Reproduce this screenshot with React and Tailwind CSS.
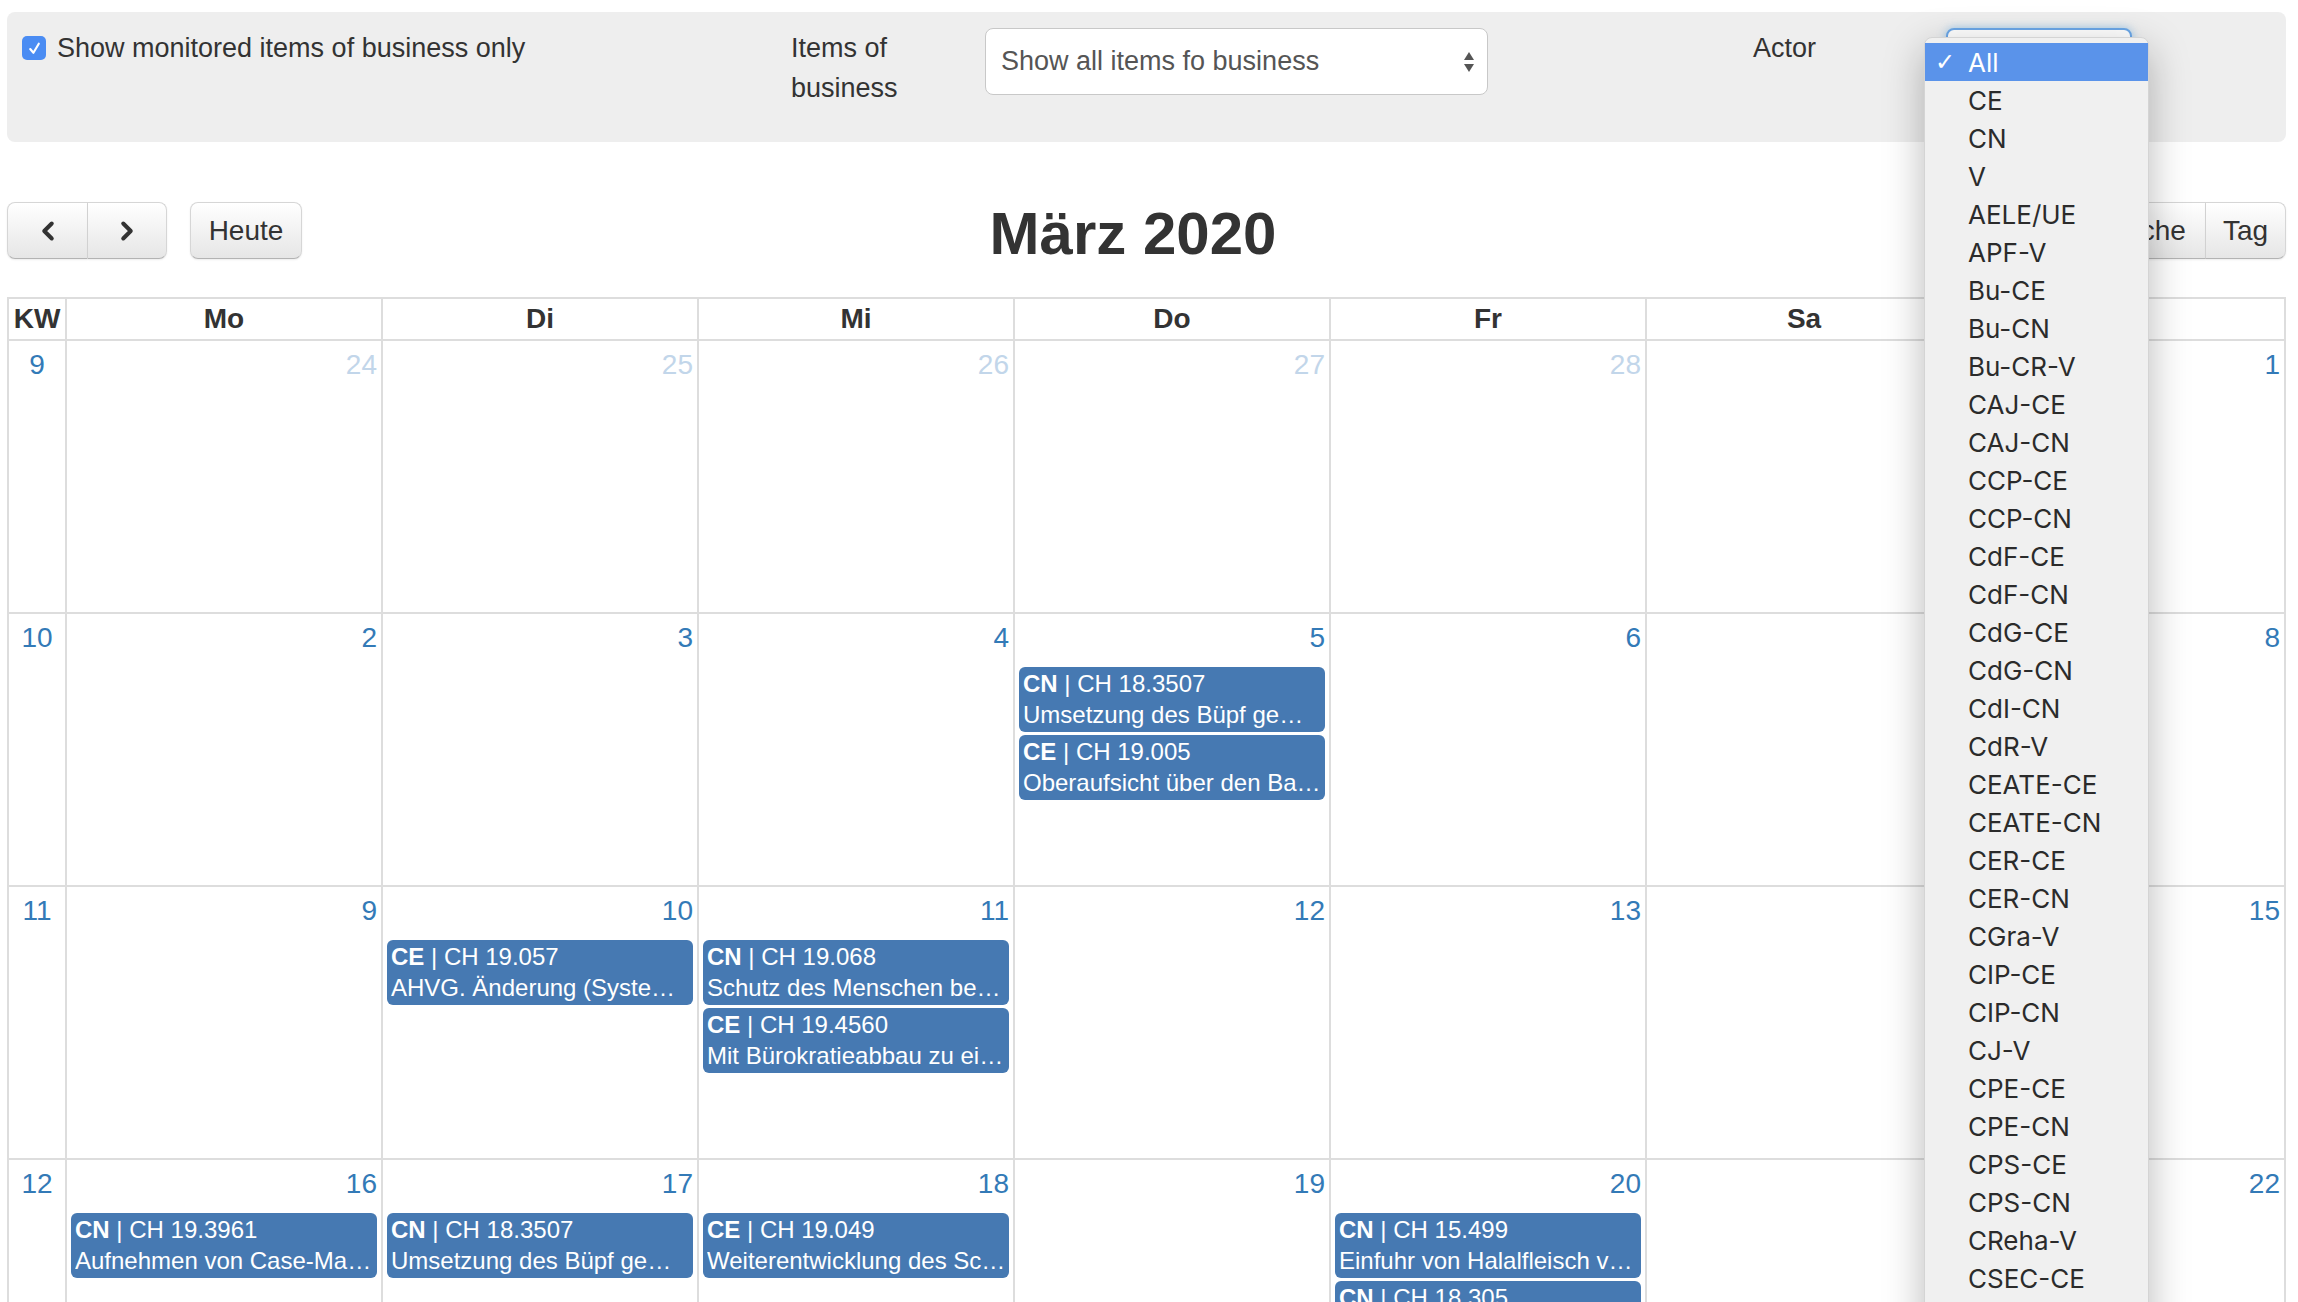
import { ChevronLeft, ChevronRight } from 'lucide-react';

const ACTORS = [
  'All', 'CE', 'CN', 'V', 'AELE/UE', 'APF-V', 'Bu-CE', 'Bu-CN', 'Bu-CR-V', 'CAJ-CE', 'CAJ-CN',
  'CCP-CE', 'CCP-CN', 'CdF-CE', 'CdF-CN', 'CdG-CE', 'CdG-CN', 'CdI-CN', 'CdR-V', 'CEATE-CE',
  'CEATE-CN', 'CER-CE', 'CER-CN', 'CGra-V', 'CIP-CE', 'CIP-CN', 'CJ-V', 'CPE-CE', 'CPE-CN',
  'CPS-CE', 'CPS-CN', 'CReha-V', 'CSEC-CE', 'CSEC-CN', 'CSSS-CE',
];

const DAYS = ['Mo', 'Di', 'Mi', 'Do', 'Fr', 'Sa', 'So'];

const EVENTS = {
  5: [
    { actor: 'CN', id: 'CH 18.3507', title: 'Umsetzung des Büpf ge…' },
    { actor: 'CE', id: 'CH 19.005', title: 'Oberaufsicht über den Ba…' },
  ],
  10: [{ actor: 'CE', id: 'CH 19.057', title: 'AHVG. Änderung (Syste…' }],
  11: [
    { actor: 'CN', id: 'CH 19.068', title: 'Schutz des Menschen be…' },
    { actor: 'CE', id: 'CH 19.4560', title: 'Mit Bürokratieabbau zu ei…' },
  ],
  16: [{ actor: 'CN', id: 'CH 19.3961', title: 'Aufnehmen von Case-Ma…' }],
  17: [{ actor: 'CN', id: 'CH 18.3507', title: 'Umsetzung des Büpf ge…' }],
  18: [{ actor: 'CE', id: 'CH 19.049', title: 'Weiterentwicklung des Sc…' }],
  20: [
    { actor: 'CN', id: 'CH 15.499', title: 'Einfuhr von Halalfleisch v…' },
    { actor: 'CN', id: 'CH 18.305', title: 'Verbot von Halal…' },
  ],
};

const WEEKS = [
  { kw: 9, days: [24, 25, 26, 27, 28, 29, 1], other: [true, true, true, true, true, true, false] },
  { kw: 10, days: [2, 3, 4, 5, 6, 7, 8] },
  { kw: 11, days: [9, 10, 11, 12, 13, 14, 15] },
  { kw: 12, days: [16, 17, 18, 19, 20, 21, 22] },
];

function FcButton({ children, className = '' }) {
  return (
    <button
      className={`h-[57px] flex items-center justify-center border border-[#d6d6d6] border-b-[#b3b3b3] bg-linear-to-b from-white to-[#e6e6e6] text-[#333] text-[28px] shadow-[0_1px_2px_rgba(0,0,0,0.08)] ${className}`}
    >
      {children}
    </button>
  );
}

function Event({ ev }) {
  return (
    <div className="h-[65px] mb-[3px] rounded-[6px] bg-[#4679b2] text-white text-[24px] leading-[31px] px-[4px] pt-[1px] overflow-hidden whitespace-nowrap">
      <div>
        <span className="font-bold">{ev.actor}</span> | {ev.id}
      </div>
      <div className="overflow-hidden">{ev.title}</div>
    </div>
  );
}

export default function App() {
  return (
    <div className="relative h-[1302px] w-full overflow-hidden bg-white text-[#333] font-['Liberation_Sans',Arial,sans-serif]">
      {/* filter panel */}
      <div className="ml-[7px] mr-[12px] mt-[12px] h-[130px] rounded-[8px] bg-[#eeeeee] flex items-start text-[27px]">
        <div className="w-[784px] pl-[15px] pt-[16px] flex items-center gap-[11px]">
          <div className="w-[24px] h-[24px] rounded-[5px] bg-[#4a8cf3] flex items-center justify-center">
            <svg width="15" height="15" viewBox="0 0 14 14">
              <path d="M3 7.5 L6 11 L11 2.5" fill="none" stroke="white" strokeWidth="2" strokeLinecap="round" strokeLinejoin="round" />
            </svg>
          </div>
          <span className="leading-[40px]">Show monitored items of business only</span>
        </div>
        <div className="w-[194px] pt-[16px] leading-[40px]">
          Items of
          <br />
          business
        </div>
        <div className="w-[503px] h-[67px] mt-[16px] rounded-[8px] border border-[#c8c8c8] bg-white flex items-center justify-between pl-[15px] pr-[12px] text-[#555]">
          <span>Show all items fo business</span>
          <svg width="12" height="24" viewBox="0 0 12 24">
            <path d="M6 2 L11 10 L1 10 Z" fill="#555" />
            <path d="M6 22 L11 14 L1 14 Z" fill="#555" />
          </svg>
        </div>
        <div className="w-[265px]" />
        <div className="w-[193px] pt-[16px] leading-[40px]">Actor</div>
        <div className="w-[186px] h-[67px] mt-[16px] rounded-[8px] border-2 border-[#6ba7e8] bg-white shadow-[0_0_8px_rgba(102,175,233,0.6)]" />
      </div>

      {/* toolbar */}
      <div className="ml-[7px] mr-[12px] mt-[60px] h-[57px] flex items-center">
        <div className="flex">
          <FcButton className="w-[81px] rounded-l-[8px]">
            <ChevronLeft size={30} strokeWidth={3.2} />
          </FcButton>
          <FcButton className="w-[79px] rounded-r-[8px] border-l-0">
            <ChevronRight size={30} strokeWidth={3.2} />
          </FcButton>
        </div>
        <FcButton className="ml-[23px] w-[112px] rounded-[8px]">Heute</FcButton>
        <div className="flex-1 text-center pt-[7px]">
          <h2 className="text-[60px] font-bold leading-none">März 2020</h2>
        </div>
        <div className="flex">
          <FcButton className="w-[116px] rounded-l-[8px] bg-none bg-[#cccccc] shadow-[inset_0_2px_4px_rgba(0,0,0,0.15)]">Monat</FcButton>
          <FcButton className="w-[126px] border-l-0">Woche</FcButton>
          <FcButton className="w-[80px] rounded-r-[8px] border-l-0">Tag</FcButton>
        </div>
      </div>

      {/* calendar */}
      <div className="ml-[7px] mr-[12px] mt-[38px] border-t-2 border-l-2 border-[#dddddd]">
        <div className="grid grid-cols-[58px_repeat(6,316px)_1fr]">
          <div className="h-[42px] border-r-2 border-b-2 border-[#dddddd] flex items-center justify-center text-[28px] font-bold">KW</div>
          {DAYS.map((d) => (
            <div key={d} className="h-[42px] border-r-2 border-b-2 border-[#dddddd] flex items-center justify-center text-[28px] font-bold">
              {d}
            </div>
          ))}
        </div>
        {WEEKS.map((w) => (
          <div key={w.kw} className="grid grid-cols-[58px_repeat(6,316px)_1fr]">
            <div className="h-[273px] border-r-2 border-b-2 border-[#dddddd] text-center text-[28px] leading-[32px] pt-[8px] text-[#337ab7]">
              {w.kw}
            </div>
            {w.days.map((n, i) => {
              const other = w.other ? w.other[i] : false;
              const evs = other ? [] : EVENTS[n] || [];
              return (
                <div key={i} className="h-[273px] min-w-0 border-r-2 border-b-2 border-[#dddddd]">
                  <div className={`text-right pr-[4px] pt-[8px] text-[28px] leading-[32px] ${other ? 'text-[#c2d6ea]' : 'text-[#337ab7]'}`}>
                    {n}
                  </div>
                  <div className="mt-[13px] px-[4px]">
                    {evs.map((ev, j) => (
                      <Event key={j} ev={ev} />
                    ))}
                  </div>
                </div>
              );
            })}
          </div>
        ))}
      </div>

      {/* native select popup */}
      <div className="absolute left-[1924px] top-[37px] w-[225px] pt-[5px] pb-[5px] rounded-[8px] bg-[#f0f0f0] border border-[#d4d4d4] shadow-[0_12px_40px_rgba(0,0,0,0.28)] font-['Inter',sans-serif] text-[26px] text-[#2b2b2b]">
        {ACTORS.map((a, i) => (
          <div key={a} className={`h-[38px] flex items-center ${i === 0 ? 'bg-[#5a93ea] text-white' : ''}`}>
            <span className="w-[43px] pl-[10px] font-['DejaVu_Sans',sans-serif] text-[24px]">{i === 0 ? '✓' : ''}</span>
            <span>{a}</span>
          </div>
        ))}
      </div>
    </div>
  );
}
